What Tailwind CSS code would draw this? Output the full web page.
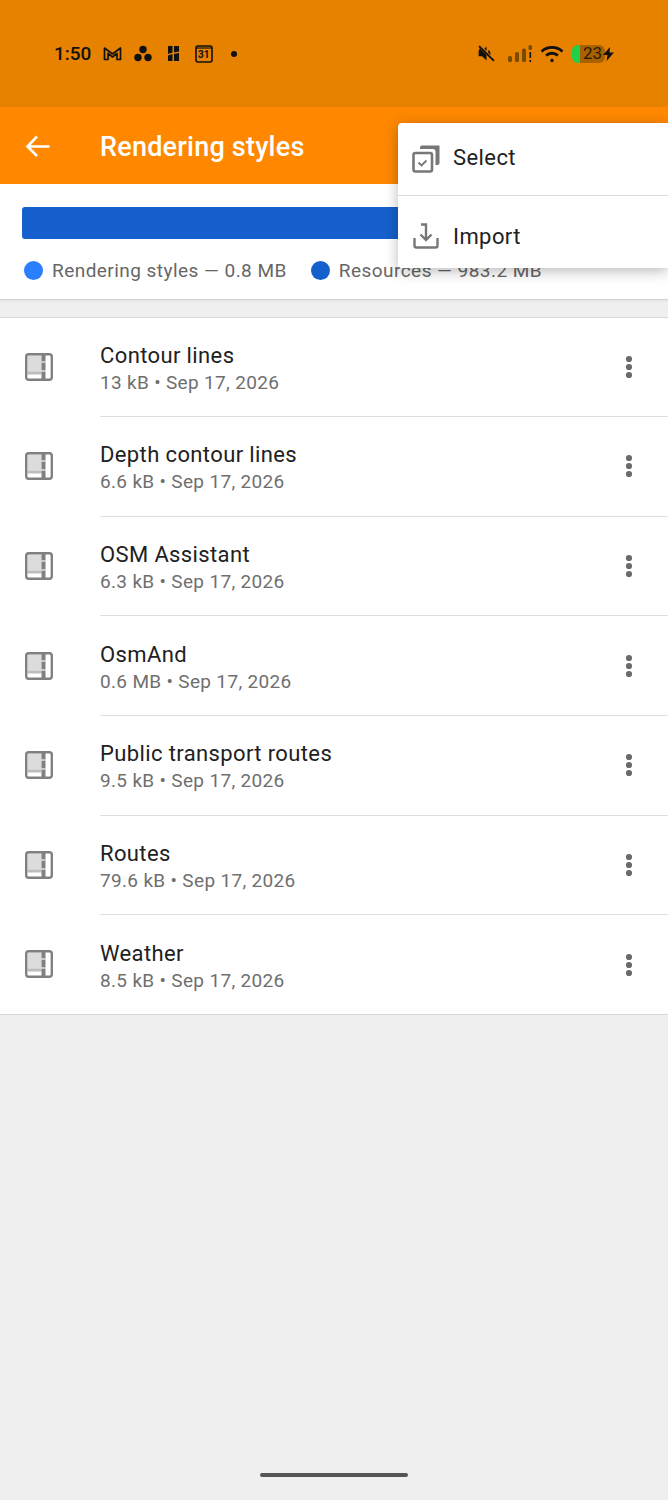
<!DOCTYPE html>
<html lang="en">
<head>
  <meta charset="UTF-8" />
  <title>Rendering styles</title>
  <script src="https://cdn.jsdelivr.net/npm/@tailwindcss/browser@4"></script>
</head>
<body class="font-['Roboto',sans-serif] bg-[#efefef]">
<div class="relative w-[668px] h-[1500px] overflow-hidden bg-[#efefef]">

  <!-- status bar -->
  <div class="h-[107px] bg-[#e68200] flex items-center justify-between pl-[54px] pr-[54px] text-[#111]">
    <div class="flex items-center">
      <span class="text-[19px] font-medium leading-none w-[49px]">1:50</span>
      <svg class="w-[19px] h-[15px]" viewBox="0 0 19 15" fill="none" stroke="#111" stroke-width="1.700" stroke-linejoin="round"><path d="M1.500 13.500V2L9.500 8 17.500 2V13.500H14V7.500L9.500 11 5 7.500v6z"/></svg>
      <svg class="w-[18px] h-[17px] ml-[12px]" viewBox="0 0 18 17" fill="#111"><circle cx="9" cy="4.500" r="3.700"/><circle cx="4" cy="12.500" r="3.700"/><circle cx="14" cy="12.500" r="3.700"/></svg>
      <svg class="w-[11px] h-[15px] ml-[16px]" viewBox="0 0 11 15" fill="#111"><path d="M0 0h4.500v6.500L0 8zM6 0h5v5.500L6 6.500zM0 9.500l4.500-1.500V15H0zM6 8l5-1v8H6z"/></svg>
      <svg class="w-[18px] h-[18px] ml-[16px]" viewBox="0 0 18 18" fill="none"><rect x="1" y="1" width="16" height="16" rx="2" stroke="#111" stroke-width="1.600"/><path d="M1 3h16" stroke="#111" stroke-width="1.200"/></svg>
      <span class="w-0 text-[10px] font-bold leading-none ml-[-15px] mt-[2px]">31</span>
      <span class="w-[6px] h-[6px] rounded-full bg-[#111] ml-[33px]"></span>
    </div>
    <div class="flex items-center">
      <svg class="w-[21px] h-[21px]" viewBox="0 0 24 24" fill="#111"><path d="M3 9v6h4l5 5v-6.200L4.300 6.100 3 9zM12 4 9.500 6.500 12 9zM16.500 12c0-1.800-1-3.300-2.500-4v3.200l2.400 2.400c.1-.5.100-1 .1-1.600z"/><path d="M3.500 3.500l17 17" stroke="#111" stroke-width="2.200"/></svg>
      <svg class="w-[25px] h-[18px] ml-[11px]" viewBox="0 0 25 18" fill="#7a4a00"><rect x="0" y="11" width="4" height="6" rx="1.500"/><rect x="7" y="7" width="4" height="10" rx="1.500"/><rect x="14" y="3.500" width="4" height="13.500" rx="1.500"/><rect x="20.500" y="0" width="3.500" height="5" rx="1.500"/><rect x="21.500" y="7" width="1.600" height="6" fill="#111"/><rect x="21.500" y="15" width="1.600" height="2" fill="#111"/></svg>
      <svg class="w-[24px] h-[18px] ml-[7px]" viewBox="0 0 24 18" fill="none" stroke="#111" stroke-width="2.800"><path d="M1.500 6.500C7.500 1 16.500 1 22.500 6.500"/><path d="M6 10.500c3.500-3 8.500-3 12 0"/><circle cx="12" cy="15.500" r="1.300" fill="#111" stroke-width="1"/></svg>
      <div class="relative w-[33px] h-[18px] ml-[8px] rounded-[6px] bg-[#a86000] overflow-hidden flex items-center justify-end pr-[3px]">
        <span class="absolute left-0 top-0 w-[8px] h-[18px] bg-[#1fd14a]"></span>
        <span class="relative text-[17px] leading-none text-[#2a1c00]">23</span>
      </div>
      <svg class="relative w-[11px] h-[14px] ml-[-2px]" viewBox="0 0 11 14" fill="#111"><path d="M7 0 0 8h4.500L3.500 14 11 5.500H6.500z"/></svg>
    </div>
  </div>

  <!-- toolbar -->
  <div class="h-[77px] bg-[#ff8800] flex items-center pl-[25px] text-white">
    <svg class="w-[26px] h-[26px]" viewBox="0 0 26 26" fill="none" stroke="#fff" stroke-width="2.600"><path d="M24.500 13.500H2.500M12 3.500l-9.500 10L12 23"/></svg>
    <h1 class="ml-[49px] text-[27px] font-medium leading-none mt-[4px] tracking-[0.22px]">Rendering styles</h1>
  </div>

  <!-- storage usage -->
  <div class="h-[116px] bg-white border-b border-[#d4d4d4] px-[22px] pt-[23px] shadow-[0_1px_2px_rgba(0,0,0,0.06)]">
    <div class="h-[32px] rounded-[3px] bg-[#1560cc]"></div>
    <div class="flex items-center mt-[22px] text-[19px] leading-none text-[#666] tracking-[0.46px]">
      <span class="w-[19px] h-[19px] ml-[2px] rounded-full bg-[#2a7fff]"></span>
      <span class="ml-[9px]">Rendering styles — 0.8 MB</span>
      <span class="w-[19px] h-[19px] ml-[24px] rounded-full bg-[#1560cc]"></span>
      <span class="ml-[9px]">Resources — 983.2 MB</span>
    </div>
  </div>

  <!-- styles list -->
  <div class="mt-[16.600px] bg-white border-y border-[#d9d9d9]">
    <div class="h-[99.600px] flex items-center">
      <svg class="w-[28px] h-[28px] ml-[25px] mt-[-1px] shrink-0" viewBox="0 0 28 28" fill="none"><rect x="2.500" y="2.500" width="14" height="16" fill="#dcdcdc"/><rect x="2.500" y="18.500" width="14" height="3" fill="#bdbdbd"/><path d="M18.500 2v24" stroke="#808080" stroke-width="4"/><path d="M16 9h5M16 18h5" stroke="#ddd" stroke-width="1.500"/><rect x="1.200" y="1.200" width="25.600" height="25.600" rx="2.500" stroke="#808080" stroke-width="2.400"/></svg>
      <div class="ml-[47px] flex-1 h-full flex items-center justify-between border-b border-[#dedede] pr-[35px]">
        <div class="tracking-[0.38px] pt-[5px]"><div class="text-[22px] leading-[26px] text-[#212121]">Contour lines</div><div class="text-[19px] leading-[27px] text-[#6f6f6f] tracking-[0.33px]">13 kB • Sep 17, 2026</div></div>
        <svg class="w-[8px] h-[24px]" viewBox="0 0 8 24" fill="#6a6a6a"><circle cx="4" cy="4" r="3.100"/><circle cx="4" cy="12" r="3.100"/><circle cx="4" cy="20" r="3.100"/></svg>
      </div>
    </div>
    <div class="h-[99.600px] flex items-center">
      <svg class="w-[28px] h-[28px] ml-[25px] mt-[-1px] shrink-0" viewBox="0 0 28 28" fill="none"><rect x="2.500" y="2.500" width="14" height="16" fill="#dcdcdc"/><rect x="2.500" y="18.500" width="14" height="3" fill="#bdbdbd"/><path d="M18.500 2v24" stroke="#808080" stroke-width="4"/><path d="M16 9h5M16 18h5" stroke="#ddd" stroke-width="1.500"/><rect x="1.200" y="1.200" width="25.600" height="25.600" rx="2.500" stroke="#808080" stroke-width="2.400"/></svg>
      <div class="ml-[47px] flex-1 h-full flex items-center justify-between border-b border-[#dedede] pr-[35px]">
        <div class="tracking-[0.38px] pt-[5px]"><div class="text-[22px] leading-[26px] text-[#212121]">Depth contour lines</div><div class="text-[19px] leading-[27px] text-[#6f6f6f] tracking-[0.33px]">6.6 kB • Sep 17, 2026</div></div>
        <svg class="w-[8px] h-[24px]" viewBox="0 0 8 24" fill="#6a6a6a"><circle cx="4" cy="4" r="3.100"/><circle cx="4" cy="12" r="3.100"/><circle cx="4" cy="20" r="3.100"/></svg>
      </div>
    </div>
    <div class="h-[99.600px] flex items-center">
      <svg class="w-[28px] h-[28px] ml-[25px] mt-[-1px] shrink-0" viewBox="0 0 28 28" fill="none"><rect x="2.500" y="2.500" width="14" height="16" fill="#dcdcdc"/><rect x="2.500" y="18.500" width="14" height="3" fill="#bdbdbd"/><path d="M18.500 2v24" stroke="#808080" stroke-width="4"/><path d="M16 9h5M16 18h5" stroke="#ddd" stroke-width="1.500"/><rect x="1.200" y="1.200" width="25.600" height="25.600" rx="2.500" stroke="#808080" stroke-width="2.400"/></svg>
      <div class="ml-[47px] flex-1 h-full flex items-center justify-between border-b border-[#dedede] pr-[35px]">
        <div class="tracking-[0.38px] pt-[5px]"><div class="text-[22px] leading-[26px] text-[#212121]">OSM Assistant</div><div class="text-[19px] leading-[27px] text-[#6f6f6f] tracking-[0.33px]">6.3 kB • Sep 17, 2026</div></div>
        <svg class="w-[8px] h-[24px]" viewBox="0 0 8 24" fill="#6a6a6a"><circle cx="4" cy="4" r="3.100"/><circle cx="4" cy="12" r="3.100"/><circle cx="4" cy="20" r="3.100"/></svg>
      </div>
    </div>
    <div class="h-[99.600px] flex items-center">
      <svg class="w-[28px] h-[28px] ml-[25px] mt-[-1px] shrink-0" viewBox="0 0 28 28" fill="none"><rect x="2.500" y="2.500" width="14" height="16" fill="#dcdcdc"/><rect x="2.500" y="18.500" width="14" height="3" fill="#bdbdbd"/><path d="M18.500 2v24" stroke="#808080" stroke-width="4"/><path d="M16 9h5M16 18h5" stroke="#ddd" stroke-width="1.500"/><rect x="1.200" y="1.200" width="25.600" height="25.600" rx="2.500" stroke="#808080" stroke-width="2.400"/></svg>
      <div class="ml-[47px] flex-1 h-full flex items-center justify-between border-b border-[#dedede] pr-[35px]">
        <div class="tracking-[0.38px] pt-[5px]"><div class="text-[22px] leading-[26px] text-[#212121]">OsmAnd</div><div class="text-[19px] leading-[27px] text-[#6f6f6f] tracking-[0.33px]">0.6 MB • Sep 17, 2026</div></div>
        <svg class="w-[8px] h-[24px]" viewBox="0 0 8 24" fill="#6a6a6a"><circle cx="4" cy="4" r="3.100"/><circle cx="4" cy="12" r="3.100"/><circle cx="4" cy="20" r="3.100"/></svg>
      </div>
    </div>
    <div class="h-[99.600px] flex items-center">
      <svg class="w-[28px] h-[28px] ml-[25px] mt-[-1px] shrink-0" viewBox="0 0 28 28" fill="none"><rect x="2.500" y="2.500" width="14" height="16" fill="#dcdcdc"/><rect x="2.500" y="18.500" width="14" height="3" fill="#bdbdbd"/><path d="M18.500 2v24" stroke="#808080" stroke-width="4"/><path d="M16 9h5M16 18h5" stroke="#ddd" stroke-width="1.500"/><rect x="1.200" y="1.200" width="25.600" height="25.600" rx="2.500" stroke="#808080" stroke-width="2.400"/></svg>
      <div class="ml-[47px] flex-1 h-full flex items-center justify-between border-b border-[#dedede] pr-[35px]">
        <div class="tracking-[0.38px] pt-[5px]"><div class="text-[22px] leading-[26px] text-[#212121]">Public transport routes</div><div class="text-[19px] leading-[27px] text-[#6f6f6f] tracking-[0.33px]">9.5 kB • Sep 17, 2026</div></div>
        <svg class="w-[8px] h-[24px]" viewBox="0 0 8 24" fill="#6a6a6a"><circle cx="4" cy="4" r="3.100"/><circle cx="4" cy="12" r="3.100"/><circle cx="4" cy="20" r="3.100"/></svg>
      </div>
    </div>
    <div class="h-[99.600px] flex items-center">
      <svg class="w-[28px] h-[28px] ml-[25px] mt-[-1px] shrink-0" viewBox="0 0 28 28" fill="none"><rect x="2.500" y="2.500" width="14" height="16" fill="#dcdcdc"/><rect x="2.500" y="18.500" width="14" height="3" fill="#bdbdbd"/><path d="M18.500 2v24" stroke="#808080" stroke-width="4"/><path d="M16 9h5M16 18h5" stroke="#ddd" stroke-width="1.500"/><rect x="1.200" y="1.200" width="25.600" height="25.600" rx="2.500" stroke="#808080" stroke-width="2.400"/></svg>
      <div class="ml-[47px] flex-1 h-full flex items-center justify-between border-b border-[#dedede] pr-[35px]">
        <div class="tracking-[0.38px] pt-[5px]"><div class="text-[22px] leading-[26px] text-[#212121]">Routes</div><div class="text-[19px] leading-[27px] text-[#6f6f6f] tracking-[0.33px]">79.6 kB • Sep 17, 2026</div></div>
        <svg class="w-[8px] h-[24px]" viewBox="0 0 8 24" fill="#6a6a6a"><circle cx="4" cy="4" r="3.100"/><circle cx="4" cy="12" r="3.100"/><circle cx="4" cy="20" r="3.100"/></svg>
      </div>
    </div>
    <div class="h-[99.200px] flex items-center">
      <svg class="w-[28px] h-[28px] ml-[25px] mt-[-1px] shrink-0" viewBox="0 0 28 28" fill="none"><rect x="2.500" y="2.500" width="14" height="16" fill="#dcdcdc"/><rect x="2.500" y="18.500" width="14" height="3" fill="#bdbdbd"/><path d="M18.500 2v24" stroke="#808080" stroke-width="4"/><path d="M16 9h5M16 18h5" stroke="#ddd" stroke-width="1.500"/><rect x="1.200" y="1.200" width="25.600" height="25.600" rx="2.500" stroke="#808080" stroke-width="2.400"/></svg>
      <div class="ml-[47px] flex-1 h-full flex items-center justify-between pr-[35px]">
        <div class="tracking-[0.38px] pt-[5px]"><div class="text-[22px] leading-[26px] text-[#212121]">Weather</div><div class="text-[19px] leading-[27px] text-[#6f6f6f] tracking-[0.33px]">8.5 kB • Sep 17, 2026</div></div>
        <svg class="w-[8px] h-[24px]" viewBox="0 0 8 24" fill="#6a6a6a"><circle cx="4" cy="4" r="3.100"/><circle cx="4" cy="12" r="3.100"/><circle cx="4" cy="20" r="3.100"/></svg>
      </div>
    </div>
  </div>

  <!-- overflow menu -->
  <div class="absolute left-[398px] top-[123px] w-[270px] h-[145px] bg-white rounded-l-[4px] shadow-[0_3px_14px_rgba(0,0,0,0.28)]">
    <div class="h-[73px] flex items-center border-b border-[#dcdcdc] pl-[14px] pb-[2px]">
      <svg class="w-[29px] h-[29px]" viewBox="0 0 29 29" fill="none"><rect x="1.500" y="9" width="18.500" height="18.500" rx="2" stroke="#777" stroke-width="2.600"/><path d="M8 3.500Q8 1.500 10 1.500H27.500V19q0 2-2 2h-2V7.500Q23.500 5 21 5H8z" fill="#777"/><path d="M6.500 18.500l3 3 5-5" stroke="#777" stroke-width="1.800"/></svg>
      <span class="ml-[12px] text-[22px] leading-none text-[#212121] tracking-[0.42px]">Select</span>
    </div>
    <div class="h-[72px] flex items-center pl-[15px] pt-[10px]">
      <svg class="w-[26px] h-[26px] mt-[-2px]" viewBox="0 0 26 26" fill="none" stroke="#777" stroke-width="2.400"><path d="M1.500 15v7.500q0 2 2 2h19q2 0 2-2V15"/><path d="M8 1.500h5v15M7.500 11.500l5.500 5.500 5.500-5.500"/></svg>
      <span class="ml-[14px] text-[22px] leading-none text-[#212121] tracking-[0.42px]">Import</span>
    </div>
  </div>

  <!-- gesture bar -->
  <div class="absolute left-[260px] top-[1473px] w-[148px] h-[4px] rounded-full bg-[#555]"></div>
</div>
</body>
</html>
